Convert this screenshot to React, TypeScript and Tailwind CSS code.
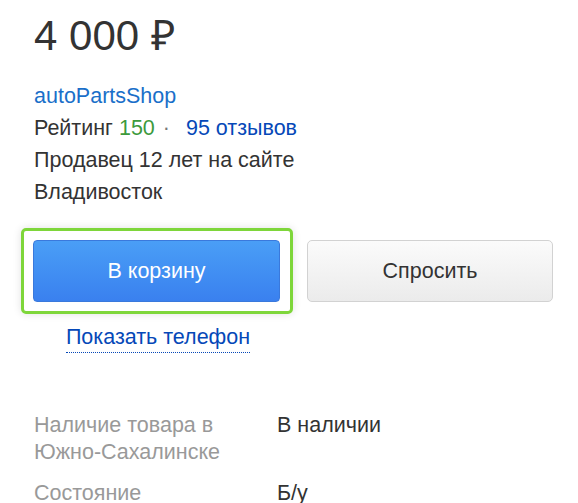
import React from "react";

export default function App() {
  return (
    <div className="min-h-[503px] w-[578px] bg-white pl-[34px] pt-[12px] text-[#333] [font-family:'Liberation_Sans',Arial,sans-serif]">
      <div className="text-[42px] leading-[48px]">4 000 ₽</div>

      <div className="mt-[20px] text-[21.5px] leading-[32px]">
        <div className="text-[#1a6fc9]">autoPartsShop</div>
        <div>
          Рейтинг <span className="text-[#3c9a3c]">150</span>{" "}
          <span className="ml-[2px] mr-[10px] text-[#777]">·</span>{" "}
          <span className="text-[#0548b8]">95 отзывов</span>
        </div>
        <div>Продавец 12 лет на сайте</div>
        <div>Владивосток</div>
      </div>

      <div className="ml-[-13px] mt-[20px] flex items-center">
        <div className="rounded-[5px] border-[3px] border-[#7ed63a] py-[9px] pl-[9px] pr-[10px] shadow-[0_0_8px_rgba(0,0,0,0.12)]">
          <button className="flex h-[62px] w-[247px] items-center justify-center rounded-[4px] border border-[#3a79dc] bg-gradient-to-b from-[#4a9ef6] to-[#3a80ef] text-[21.5px] text-white">
            В корзину
          </button>
        </div>
        <button className="ml-[14px] flex h-[62px] w-[246px] items-center justify-center rounded-[5px] border border-[#d2d2d2] bg-gradient-to-b from-[#fbfbfb] to-[#ebebeb] text-[21.5px] text-[#333]">
          Спросить
        </button>
      </div>

      <div className="ml-[-13px] mt-[9px] w-[274px] text-center text-[21.5px] leading-[28px]">
        <span className="border-b border-dotted border-[#0548b8] pb-[3px] text-[#0548b8]">
          Показать телефон
        </span>
      </div>

      <div className="mt-[61px] text-[21.5px] leading-[27px]">
        <div className="flex">
          <div className="w-[243px] text-[#999]">
            Наличие товара в<br />Южно-Сахалинске
          </div>
          <div>В наличии</div>
        </div>
        <div className="mt-[14px] flex">
          <div className="w-[243px] text-[#999]">Состояние</div>
          <div>Б/у</div>
        </div>
      </div>
    </div>
  );
}
